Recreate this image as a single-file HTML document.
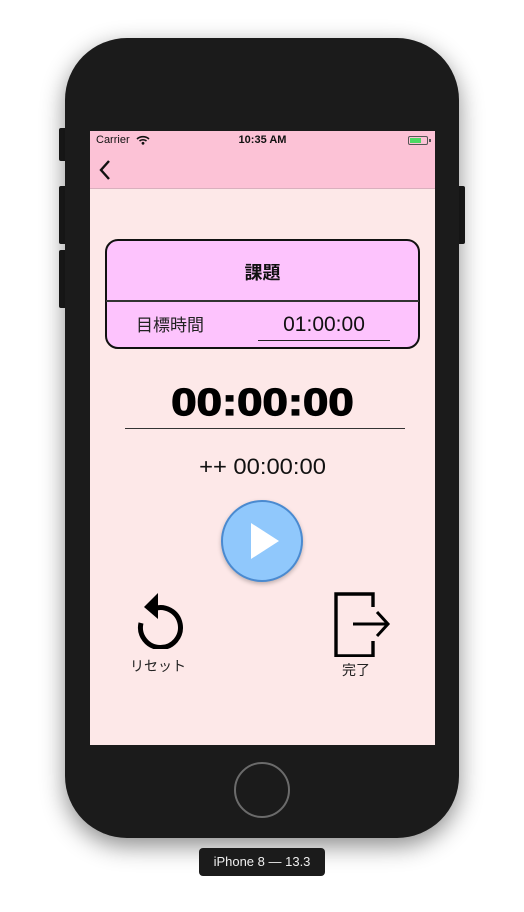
<!DOCTYPE html>
<html><head><meta charset="utf-8"><style>
*{margin:0;padding:0;box-sizing:border-box}
body{width:524px;height:912px;background:#fff;position:relative;overflow:hidden;font-family:"Liberation Sans","Noto Sans CJK JP",sans-serif}
.a{position:absolute}
.phone{left:65px;top:38px;width:394px;height:800px;border-radius:62px;background:#1b1b1b;box-shadow:0 8px 24px rgba(0,0,0,.45)}
.btn{background:#1b1b1b;border-radius:2px}
.screen{left:90px;top:131px;width:345px;height:614px;background:#fde8e8;overflow:hidden}
.c{text-align:center}
</style></head><body>
<div class="a btn" style="left:59px;top:128px;width:8px;height:33px"></div>
<div class="a btn" style="left:59px;top:186px;width:8px;height:58px"></div>
<div class="a btn" style="left:59px;top:250px;width:8px;height:58px"></div>
<div class="a btn" style="left:457px;top:186px;width:8px;height:58px"></div>
<div class="a phone"></div>
<div class="a" style="left:234px;top:762px;width:56px;height:56px;border-radius:50%;border:2px solid #6b6b6b"></div>
<div class="a c" style="left:199px;top:848px;width:126px;height:28px;background:#1b1b1b;border-radius:4px;color:#eee;font-size:13px;line-height:28px">iPhone 8 — 13.3</div>
<div class="a screen">
 <div class="a" style="left:0;top:0;width:345px;height:58px;background:#fcc2d6;border-bottom:1px solid #d9b0be"></div>
 <div class="a" style="left:6px;top:3px;font-size:11px;color:#111">Carrier</div>
 <svg class="a" style="left:46px;top:4px" width="14" height="10" viewBox="0 0 14 10"><path d="M1 4a9 9 0 0 1 12 0M3.5 6a5.5 5.5 0 0 1 7 0" stroke="#111" stroke-width="1.6" fill="none"/><circle cx="7" cy="8.3" r="1.4" fill="#111"/></svg>
 <div class="a c" style="left:0;width:345px;top:3px;font-size:11px;font-weight:bold;color:#111">10:35 AM</div>
 <div class="a" style="left:318px;top:5px;width:20px;height:9px;border:1px solid #555;border-radius:2px;padding:1px"><div style="width:11px;height:5px;background:#4cd964"></div></div>
 <div class="a" style="left:339px;top:8px;width:1.5px;height:3px;background:#555"></div>
 <svg class="a" style="left:8px;top:28px" width="14" height="22" viewBox="0 0 14 22"><path d="M11 2 3 11l8 9" stroke="#111" stroke-width="2.4" fill="none"/></svg>

 <div class="a" style="left:15px;top:108px;width:315px;height:110px;background:#fdc3fd;border:2px solid #111;border-radius:13px"></div>
 <div class="a" style="left:16px;top:169px;width:313px;height:1.5px;background:#333"></div>
 <div class="a c" style="left:15px;width:315px;top:128px;font-size:18px;font-weight:bold;color:#111">課題</div>
 <div class="a" style="left:46px;top:180px;font-size:17px;color:#222">目標時間</div>
 <div class="a c" style="left:168px;width:132px;top:182px;font-size:21px;color:#111">01:00:00</div>
 <div class="a" style="left:168px;top:209px;width:132px;height:1px;background:#222"></div>

 <div class="a c" style="left:0;width:345px;top:251px;font-size:38px;font-weight:900;color:#000;-webkit-text-stroke:1.2px #000;transform:scaleX(1.2)">00:00:00</div>
 <div class="a" style="left:35px;top:297px;width:280px;height:1px;background:#333"></div>
 <div class="a c" style="left:0;width:345px;top:323px;font-size:22px;color:#111;transform:scaleX(1.08)">++ 00:00:00</div>

 <div class="a" style="left:131px;top:369px;width:82px;height:82px;border-radius:50%;background:#90c8fc;border:2px solid #4a8ad0;box-shadow:0 2px 4px rgba(0,0,0,.25)"></div>
 <svg class="a" style="left:131px;top:369px" width="82" height="82"><path d="M30 23 58 41 30 59Z" fill="#fff"/></svg>

 <svg class="a" style="left:44px;top:460px" width="52" height="58" viewBox="0 0 52 58"><path d="M19 18A20 20 0 1 1 7 32" stroke="#000" stroke-width="5" fill="none"/><path d="M24 2 10 16l14 12Z" fill="#000"/></svg>
 <div class="a c" style="left:28px;width:80px;top:525px;font-size:14px;color:#222">リセット</div>

 <svg class="a" style="left:243px;top:460px" width="60" height="66" viewBox="0 0 60 66"><path d="M40 16V3H3v62h37V50" stroke="#000" stroke-width="3.4" fill="none"/><path d="M20 33h34M44 21l11 12-11 12" stroke="#000" stroke-width="3" fill="none"/></svg>
 <div class="a c" style="left:236px;width:60px;top:529px;font-size:14px;color:#222">完了</div>
</div>
</body></html>
